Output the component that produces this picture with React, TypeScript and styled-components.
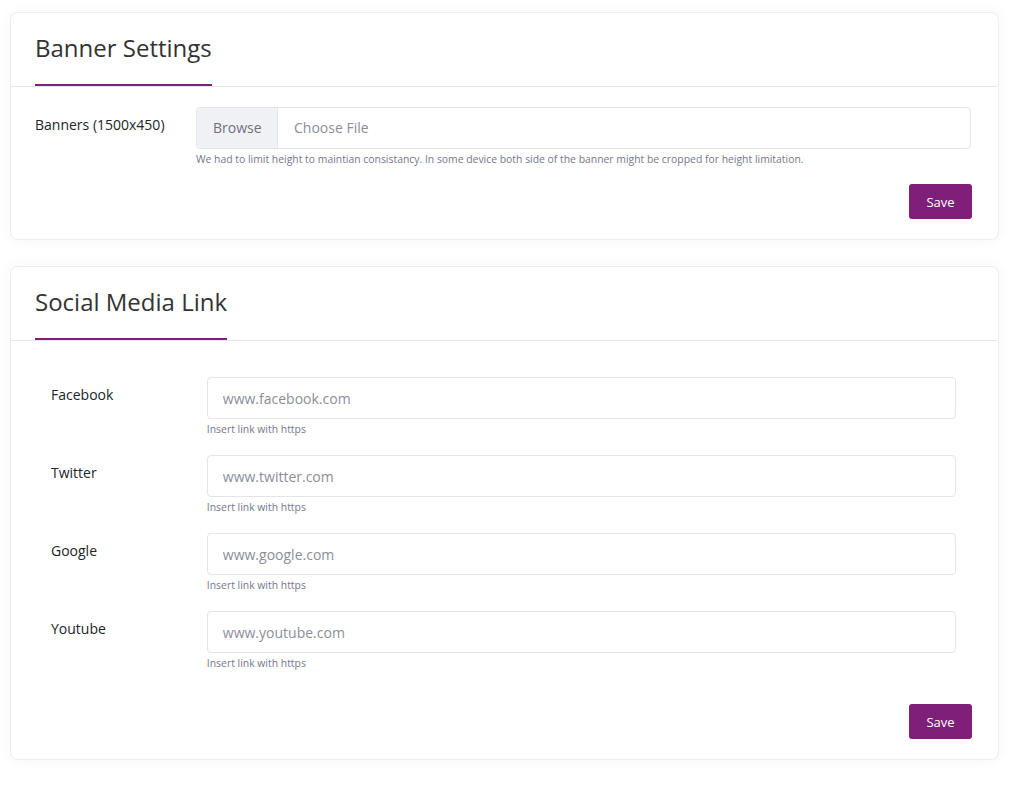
import React from "react";
import styled, { createGlobalStyle } from "styled-components";

const Global = createGlobalStyle`
  html, body { margin: 0; padding: 0; background: #ffffff; }
  body { font-family: "Open Sans", "Noto Sans", sans-serif; color: #212529; }
  * { box-sizing: border-box; }
`;

const Page = styled.div`
  padding: 12px 18px 20px 10px;
  display: flex;
  flex-direction: column;
  gap: 26px;
`;

const Card = styled.section`
  background: #fff;
  border: 1px solid #ebedf2;
  border-radius: 8px;
  box-shadow: 0 0 13px 0 rgba(82, 63, 105, 0.05);
`;

const CardHead = styled.div`
  padding: 20px 24px 0;
  border-bottom: 1px solid #e4e5ee;
`;

const Title = styled.h3`
  display: inline-block;
  margin: 0;
  font-size: 24px;
  font-weight: 400;
  line-height: 29px;
  color: #333;
  padding-bottom: 22px;
  border-bottom: 2px solid #7f1f7a;
`;

const CardBody = styled.div`
  padding: 20px 27px 20px 24px;
  display: flex;
  flex-direction: column;
`;

const FormBlock = styled.div`
  padding: 16px 15px 16px 16px;
  display: flex;
  flex-direction: column;
`;

const Row = styled.div<{ $gap: number }>`
  display: grid;
  grid-template-columns: calc((100% + 30px) / 6) 1fr;
  margin-bottom: ${(p) => p.$gap}px;
`;

const Label = styled.label`
  font-size: 14px;
  line-height: 21px;
  padding-top: 7px;
  color: #212529;
`;

const Field = styled.div`
  display: flex;
  flex-direction: column;
`;

const FileBox = styled.div`
  display: flex;
  height: 42px;
  border: 1px solid #e2e5ec;
  border-radius: 4px;
  overflow: hidden;
`;

const Browse = styled.span`
  display: flex;
  align-items: center;
  padding: 0 16px 1px;
  width: 81px;
  background: #f0f1f5;
  border-right: 1px solid #e2e5ec;
  color: #6f727d;
  font-size: 14px;
`;

const FileText = styled.span`
  display: flex;
  align-items: center;
  padding: 0 16px 1px;
  color: #8a8e99;
  font-size: 14px;
`;

const Input = styled.input`
  height: 42px;
  border: 1px solid #e2e5ec;
  border-radius: 4px;
  padding: 0 15px;
  font-family: "Open Sans", "Noto Sans", sans-serif;
  font-size: 14px;
  color: #495057;
  outline: none;
  &::placeholder { color: #8a8e99; }
`;

const Help = styled.small`
  display: block;
  font-size: 10.4px;
  line-height: 15px;
  margin-top: 3px;
  color: #74788d;
`;

const Actions = styled.div<{ $top: number }>`
  display: flex;
  justify-content: flex-end;
  margin-top: ${(p) => p.$top}px;
  margin-right: -1px;
`;

const SaveButton = styled.button`
  height: 35px;
  width: 63px;
  border: none;
  border-radius: 3px;
  background: #801f7a;
  color: #fff;
  font-family: "Open Sans", "Noto Sans", sans-serif;
  font-size: 13px;
  cursor: pointer;
`;

const links = [
  { label: "Facebook", ph: "www.facebook.com" },
  { label: "Twitter", ph: "www.twitter.com" },
  { label: "Google", ph: "www.google.com" },
  { label: "Youtube", ph: "www.youtube.com" },
];

export default function App() {
  return (
    <>
      <Global />
      <Page>
        <Card>
          <CardHead>
            <Title>Banner Settings</Title>
          </CardHead>
          <CardBody>
            <Row $gap={0}>
              <Label>Banners (1500x450)</Label>
              <Field>
                <FileBox>
                  <Browse>Browse</Browse>
                  <FileText>Choose File</FileText>
                </FileBox>
                <Help>
                  We had to limit height to maintian consistancy. In some device both side of the banner might be cropped for height limitation.
                </Help>
              </Field>
            </Row>
            <Actions $top={17}>
              <SaveButton>Save</SaveButton>
            </Actions>
          </CardBody>
        </Card>
        <Card>
          <CardHead>
            <Title>Social Media Link</Title>
          </CardHead>
          <CardBody>
            <FormBlock>
              {links.map((l, i) => (
                <Row key={l.label} $gap={i === links.length - 1 ? 0 : 18}>
                  <Label>{l.label}</Label>
                  <Field>
                    <Input placeholder={l.ph} />
                    <Help>Insert link with https</Help>
                  </Field>
                </Row>
              ))}
            </FormBlock>
            <Actions $top={17}>
              <SaveButton>Save</SaveButton>
            </Actions>
          </CardBody>
        </Card>
      </Page>
    </>
  );
}
